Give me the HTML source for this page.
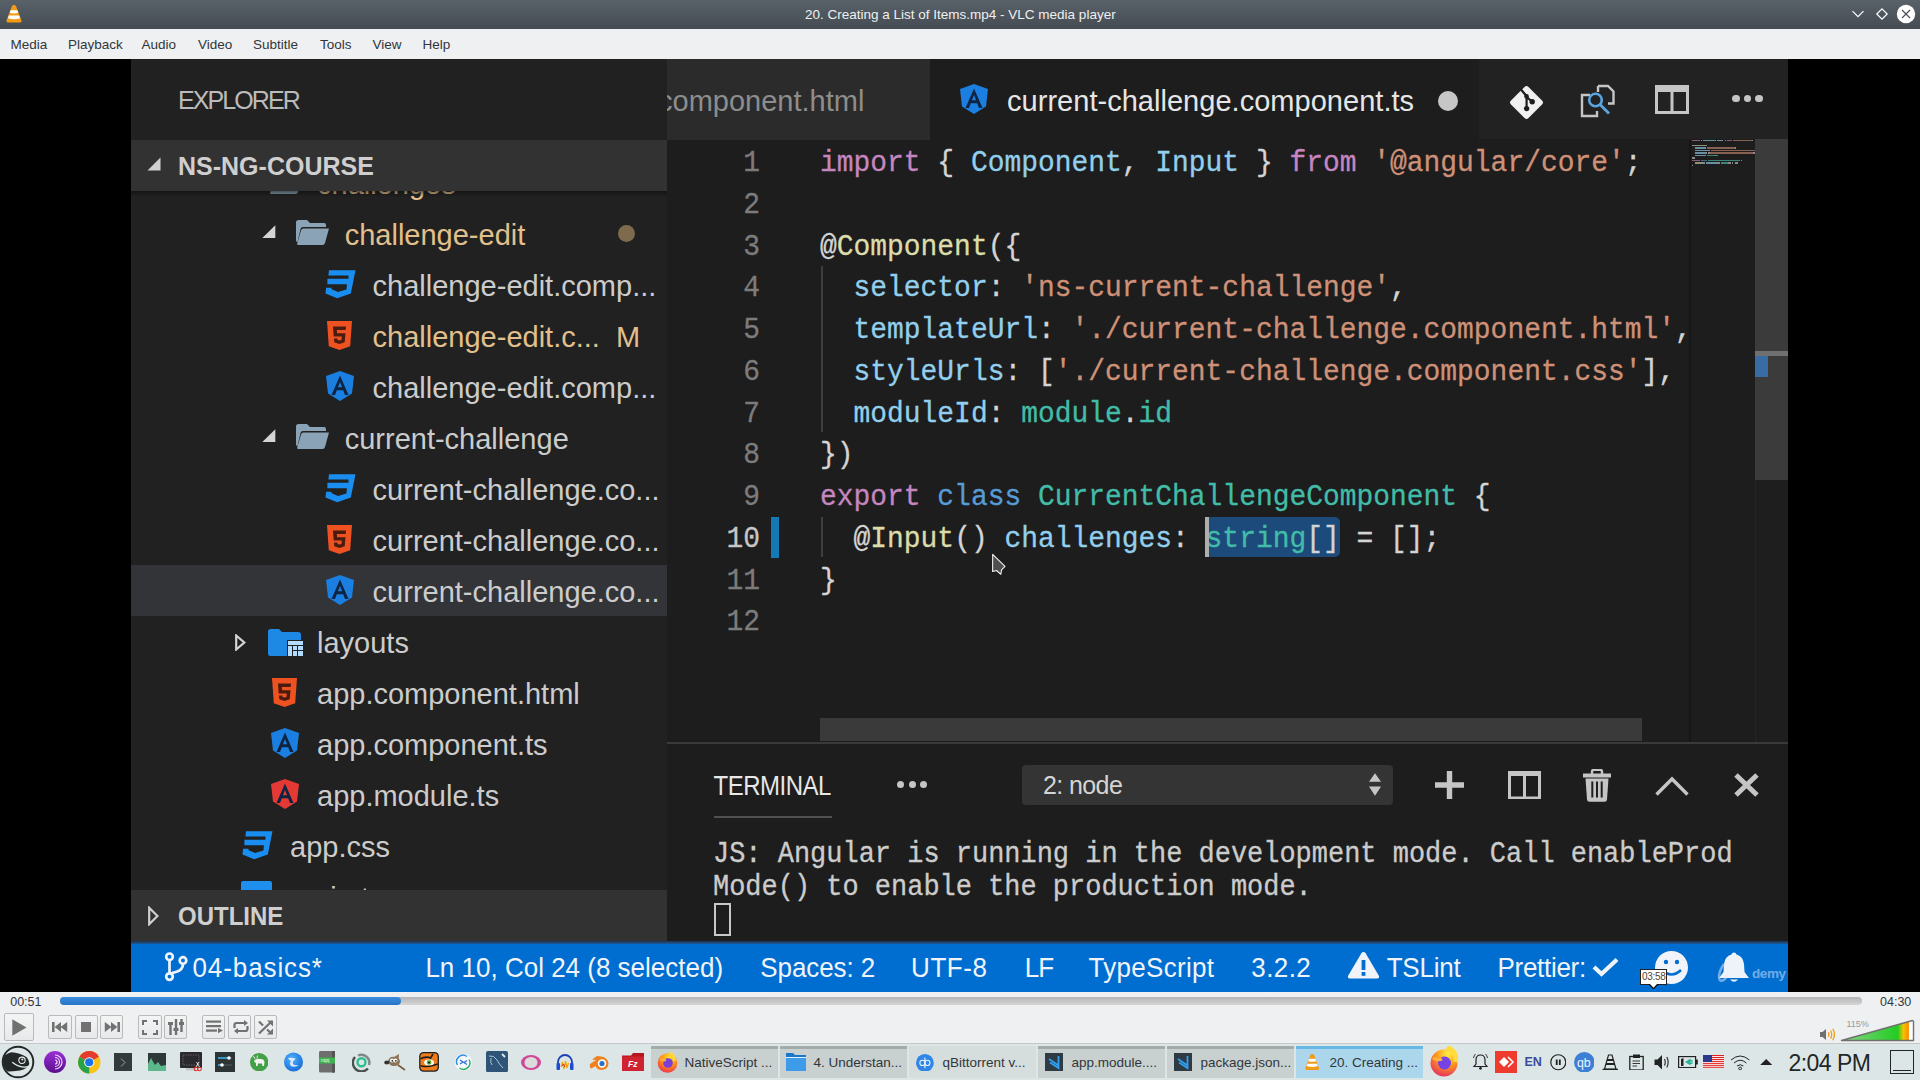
<!DOCTYPE html>
<html><head><meta charset="utf-8">
<style>
*{box-sizing:border-box;margin:0;padding:0}
html,body{width:1920px;height:1080px;overflow:hidden;background:#000;font-family:"Liberation Sans",sans-serif}
.a{position:absolute}
.t{position:absolute;white-space:pre;line-height:1}
#title{left:0;top:0;width:1920px;height:29px;background:linear-gradient(#5a6269,#444b52)}
#menu{left:0;top:29px;width:1920px;height:30px;background:#eff0f1}
#video{left:0;top:59px;width:1920px;height:933px;background:#000}
#vsc{left:131px;top:59px;width:1657px;height:933px;background:#1d1d1d;overflow:hidden}
#side{left:0;top:0;width:536px;height:882px;background:#212121;overflow:hidden}
#ctrl{left:0;top:992px;width:1920px;height:51px;background:#eff0f1}
#task{left:0;top:1043px;width:1920px;height:37px;background:#dce4e4}
.mono{font-family:"Liberation Mono",monospace;-webkit-text-stroke:0.3px currentColor}
</style></head><body>
<!-- TITLE BAR -->
<div id="title" class="a">
  <svg class="a" style="left:5px;top:4px" width="18" height="20" viewBox="0 0 18 20">
    <path d="M7.2 1.5 Q9 0.3 10.8 1.5 L16.5 16.5 Q17 18.5 15 18.5 L3 18.5 Q1 18.5 1.5 16.5 Z" fill="#f39a17"/>
    <path d="M5.6 6.2 L12.4 6.2 L13.3 8.8 Q9 10 4.7 8.8 Z" fill="#fff"/>
    <path d="M3.9 11.5 L14.1 11.5 L15.1 14.2 Q9 16.2 2.9 14.2 Z" fill="#fff"/>
  </svg>
  <div class="t" style="left:805px;top:7.6px;font-size:13.5px;color:#eef0f1">20. Creating a List of Items.mp4 - VLC media player</div>
  <svg class="a" style="left:1850px;top:8px" width="16" height="12" viewBox="0 0 16 12"><path d="M2.5 3.2 L8 8.7 L13.5 3.2" stroke="#fff" stroke-width="1.2" fill="none"/></svg>
  <svg class="a" style="left:1875px;top:7px" width="14" height="14" viewBox="0 0 14 14"><path d="M7 1.8 L12.2 7 L7 12.2 L1.8 7 Z" stroke="#fff" stroke-width="1.2" fill="none"/></svg>
  <svg class="a" style="left:1896px;top:4px" width="20" height="20" viewBox="0 0 20 20"><circle cx="10" cy="10" r="9.2" fill="#fff"/><path d="M6 6 L14 14 M14 6 L6 14" stroke="#454c54" stroke-width="1.1"/></svg>
</div>
<!-- MENU -->
<div id="menu" class="a">
  <div class="t" style="left:10.6px;top:9.2px;font-size:13.5px;color:#31363b">Media</div>
  <div class="t" style="left:68px;top:9.2px;font-size:13.5px;color:#31363b">Playback</div>
  <div class="t" style="left:141.5px;top:9.2px;font-size:13.5px;color:#31363b">Audio</div>
  <div class="t" style="left:198px;top:9.2px;font-size:13.5px;color:#31363b">Video</div>
  <div class="t" style="left:253px;top:9.2px;font-size:13.5px;color:#31363b">Subtitle</div>
  <div class="t" style="left:320px;top:9.2px;font-size:13.5px;color:#31363b">Tools</div>
  <div class="t" style="left:372.5px;top:9.2px;font-size:13.5px;color:#31363b">View</div>
  <div class="t" style="left:422.5px;top:9.2px;font-size:13.5px;color:#31363b">Help</div>
</div>
<svg width="0" height="0" style="position:absolute">
<defs>
 <symbol id="i-css" viewBox="0 0 31 29"><path d="M4 0.2 L30.5 0.2 L25.8 23.5 L12.2 28.2 L0.5 23.5 L1.1 17.7 L6.3 17.7 L6.7 19.2 L13 22 L21.5 19.6 L21.9 14.2 L2.4 14.2 L2.4 8.7 L23.5 8.7 L23.5 5.6 L3.4 5.6 Z" fill="#1a8ef0"/></symbol>
 <symbol id="i-html" viewBox="0 0 25 29"><path d="M0 0 L25 0 L23.2 25.3 L12.5 29 L1.8 25.3 Z" fill="#ee5220"/><path d="M6 5.5 L19 5.5 L18.7 9 L9.8 9 L10.1 12.3 L18.5 12.3 L17.7 21.3 L12.5 23 L7.3 21.3 L7 17.5 L10.4 17.5 L10.5 19 L12.5 19.6 L14.5 19 L14.8 15.6 L6.7 15.6 Z" fill="#4a1c10"/></symbol>
 <symbol id="i-ng" viewBox="0 0 28 30"><path d="M14 0 L28 5 L26 22.5 L14 30 L2 22.5 L0 5 Z" fill="CURRENT"/><path d="M14 4.5 L22.5 24 L19 24 L17.2 19.3 L10.8 19.3 L9 24 L5.5 24 Z M14 11 L11.9 16.3 L16.1 16.3 Z" fill="#102a44"/></symbol>
 <symbol id="i-folder" viewBox="0 0 33 25"><path d="M2.5 0 L11 0 L14 3 L28 3 Q30 3 30 5 L30 7 L7 7 Q5 7 4.5 9 L1.5 22 L1 22 Q0 22 0 20 L0 2.5 Q0 0 2.5 0 Z" fill="#8aa3b6"/><path d="M7.5 8.5 L33 8.5 L29 23 Q28.5 25 26.5 25 L2.5 25 Q0.8 25 1.2 23.5 L5 10.5 Q5.5 8.5 7.5 8.5 Z" fill="#8aa3b6"/></symbol>
 <symbol id="i-ts" viewBox="0 0 31 29"><rect x="0" y="0" width="31" height="29" rx="2" fill="#1e8fee"/></symbol>
</defs></svg>
<!-- VIDEO -->
<div id="video" class="a"></div>
<div class="a" style="left:131px;top:59px;width:1657px;height:933px;background:#1d1d1d"></div>
<!-- SIDEBAR -->
<div class="a" style="left:131px;top:59px;width:536px;height:882px;background:#212121;overflow:hidden"></div>
<div class="a" style="left:0;top:0;width:1920px;height:1080px;clip-path:inset(191px 1253px 190px 131px)">
<svg class="a" style="left:268.6px;top:169.4px" width="33" height="25"><use href="#i-folder"/></svg>
<div class="t" style="left:317px;top:169.65px;font-size:29px;color:#e2c08d">challenges</div>

<svg class="a" style="left:296.3px;top:220.4px" width="33" height="25"><use href="#i-folder"/></svg>
<svg class="a" style="left:262.0px;top:225px" width="14" height="14" viewBox="0 0 14 14"><path d="M13.3 0.3 L13.3 13 L0.3 13 Z" fill="#d4d4d4"/></svg>
<div class="t" style="left:344.7px;top:220.65px;font-size:29px;color:#e2c08d">challenge-edit</div>
<div class="a" style="left:617.5px;top:224.5px;width:17.5px;height:17.5px;border-radius:50%;background:#7e6b4e"></div>
<svg class="a" style="left:324.6px;top:269.6px" width="31" height="29"><use href="#i-css"/></svg>
<div class="t" style="left:372.6px;top:271.65px;font-size:29px;color:#cccccc">challenge-edit.comp...</div>

<svg class="a" style="left:327.40000000000003px;top:320.6px" width="25" height="29"><use href="#i-html"/></svg>
<div class="t" style="left:372.6px;top:322.65px;font-size:29px;color:#e2c08d">challenge-edit.c...</div>
<div class="t" style="left:616px;top:322.65px;font-size:29px;color:#e2c08d">M</div>
<svg class="a" style="left:326.3px;top:371.2px" width="28" height="30" viewBox="0 0 28 30"><path d="M14 0 L28 5 L26 22.5 L14 30 L2 22.5 L0 5 Z" fill="#1a7fe0"/><path d="M14 4.5 L22.5 24 L19 24 L17.2 19.3 L10.8 19.3 L9 24 L5.5 24 Z M14 11 L11.9 16.3 L16.1 16.3 Z" fill="#0f2440"/></svg>
<div class="t" style="left:372.6px;top:373.65px;font-size:29px;color:#cccccc">challenge-edit.comp...</div>

<svg class="a" style="left:296.3px;top:424.4px" width="33" height="25"><use href="#i-folder"/></svg>
<svg class="a" style="left:262.0px;top:429px" width="14" height="14" viewBox="0 0 14 14"><path d="M13.3 0.3 L13.3 13 L0.3 13 Z" fill="#d4d4d4"/></svg>
<div class="t" style="left:344.7px;top:424.65px;font-size:29px;color:#cccccc">current-challenge</div>

<svg class="a" style="left:324.6px;top:473.6px" width="31" height="29"><use href="#i-css"/></svg>
<div class="t" style="left:372.6px;top:475.65px;font-size:29px;color:#cccccc">current-challenge.co...</div>

<svg class="a" style="left:327.40000000000003px;top:524.6px" width="25" height="29"><use href="#i-html"/></svg>
<div class="t" style="left:372.6px;top:526.65px;font-size:29px;color:#cccccc">current-challenge.co...</div>

<div class="a" style="left:131px;top:565px;width:536px;height:51px;background:#333438"></div>
<svg class="a" style="left:326.3px;top:575.2px" width="28" height="30" viewBox="0 0 28 30"><path d="M14 0 L28 5 L26 22.5 L14 30 L2 22.5 L0 5 Z" fill="#1a7fe0"/><path d="M14 4.5 L22.5 24 L19 24 L17.2 19.3 L10.8 19.3 L9 24 L5.5 24 Z M14 11 L11.9 16.3 L16.1 16.3 Z" fill="#0f2440"/></svg>
<div class="t" style="left:372.6px;top:577.65px;font-size:29px;color:#cccccc">current-challenge.co...</div>

<svg class="a" style="left:268px;top:629px" width="35" height="27" viewBox="0 0 35 27"><path d="M2.5 0 L11 0 L14 3 L30 3 Q33 3 33 6 L33 11 L19 11 L19 27 L2.5 27 Q0 27 0 24.5 L0 2.5 Q0 0 2.5 0 Z" fill="#1e88e5"/><rect x="20" y="12" width="15" height="4" fill="#b3dcff"/><rect x="20" y="17" width="4" height="10" fill="#b3dcff"/><rect x="25" y="17" width="4" height="4" fill="#b3dcff"/><rect x="30" y="17" width="5" height="4" fill="#b3dcff"/><rect x="25" y="22" width="4" height="5" fill="#b3dcff"/><rect x="30" y="22" width="5" height="5" fill="#b3dcff"/></svg>
<svg class="a" style="left:235.0px;top:634px" width="11" height="17" viewBox="0 0 11 17"><path d="M1.2 1.5 L9.3 8.5 L1.2 15.5 Z" fill="none" stroke="#d4d4d4" stroke-width="2.2" stroke-linejoin="miter"/></svg>
<div class="t" style="left:317px;top:628.65px;font-size:29px;color:#cccccc">layouts</div>

<svg class="a" style="left:271.8px;top:677.6px" width="25" height="29"><use href="#i-html"/></svg>
<div class="t" style="left:317px;top:679.65px;font-size:29px;color:#cccccc">app.component.html</div>

<svg class="a" style="left:270.7px;top:728.2px" width="28" height="30" viewBox="0 0 28 30"><path d="M14 0 L28 5 L26 22.5 L14 30 L2 22.5 L0 5 Z" fill="#1a7fe0"/><path d="M14 4.5 L22.5 24 L19 24 L17.2 19.3 L10.8 19.3 L9 24 L5.5 24 Z M14 11 L11.9 16.3 L16.1 16.3 Z" fill="#0f2440"/></svg>
<div class="t" style="left:317px;top:730.65px;font-size:29px;color:#cccccc">app.component.ts</div>

<svg class="a" style="left:270.7px;top:779.2px" width="28" height="30" viewBox="0 0 28 30"><path d="M14 0 L28 5 L26 22.5 L14 30 L2 22.5 L0 5 Z" fill="#e53935"/><path d="M14 4.5 L22.5 24 L19 24 L17.2 19.3 L10.8 19.3 L9 24 L5.5 24 Z M14 11 L11.9 16.3 L16.1 16.3 Z" fill="#0f2440"/></svg>
<div class="t" style="left:317px;top:781.65px;font-size:29px;color:#cccccc">app.module.ts</div>

<svg class="a" style="left:242px;top:830.6px" width="31" height="29"><use href="#i-css"/></svg>
<div class="t" style="left:290px;top:832.65px;font-size:29px;color:#cccccc">app.css</div>

<svg class="a" style="left:241px;top:881px" width="31" height="29"><use href="#i-ts"/></svg>
<div class="t" style="left:290px;top:883.65px;font-size:29px;color:#cccccc">main.ts</div>

</div>
<div class="t" style="left:178px;top:87.5px;font-size:25px;color:#bbbbbb;letter-spacing:-1.9px">EXPLORER</div>
<div class="a" style="left:131px;top:191px;width:536px;height:6px;background:linear-gradient(rgba(10,10,10,0.55),rgba(10,10,10,0))"></div>
<div class="a" style="left:131px;top:140px;width:536px;height:51px;background:#323232"></div>
<svg class="a" style="left:147px;top:157px" width="14" height="14" viewBox="0 0 14 14"><path d="M13.5 0.5 L13.5 13.5 L0.5 13.5 Z" fill="#d0d0d0"/></svg>
<div class="t" style="left:178px;top:154px;font-size:25px;font-weight:700;color:#cfcfcf;transform:scaleY(1.05);transform-origin:0 21px">NS-NG-COURSE</div>
<div class="a" style="left:131px;top:890px;width:536px;height:51px;background:#323232"></div>
<svg class="a" style="left:148px;top:906px" width="11" height="20" viewBox="0 0 11 20"><path d="M1.2 1.8 L9.5 10 L1.2 18.2 Z" fill="none" stroke="#d0d0d0" stroke-width="2.2"/></svg>
<div class="t" style="left:178px;top:905.3px;font-size:24px;font-weight:700;color:#cfcfcf;transform:scaleY(1.1);transform-origin:0 20px">OUTLINE</div>
<!-- EDITOR -->
<div class="a" style="left:667px;top:59px;width:1121px;height:80px;background:#222222"></div>
<div class="a" style="left:667px;top:59px;width:263px;height:81px;background:#2b2b2b;overflow:hidden"><div class="t" style="left:-9px;top:28px;font-size:29px;color:#8d8d8d">component.html</div></div>
<div class="a" style="left:930px;top:59px;width:549px;height:81px;background:#1d1d1d"></div>
<svg class="a" style="left:960px;top:84px" width="28" height="30" viewBox="0 0 28 30"><path d="M14 0 L28 5 L26 22.5 L14 30 L2 22.5 L0 5 Z" fill="#1a7fe0"/><path d="M14 4.5 L22.5 24 L19 24 L17.2 19.3 L10.8 19.3 L9 24 L5.5 24 Z M14 11 L11.9 16.3 L16.1 16.3 Z" fill="#0f2440"/></svg>
<div class="t" style="left:1007px;top:87px;font-size:29px;color:#e6e6e6;letter-spacing:0.03px">current-challenge.component.ts</div>
<div class="a" style="left:1438px;top:90.5px;width:20px;height:20px;border-radius:50%;background:#c6c6c6"></div>
<svg class="a" style="left:1509px;top:85px" width="35" height="35" viewBox="0 0 35 35"><path d="M17.5 1 Q18.5 1 19.5 2 L33 15.5 Q34 16.5 34 17.5 Q34 18.5 33 19.5 L19.5 33 Q18.5 34 17.5 34 Q16.5 34 15.5 33 L2 19.5 Q1 18.5 1 17.5 Q1 16.5 2 15.5 L15.5 2 Q16.5 1 17.5 1 Z" fill="#f0f0f0"/><path d="M12 4.5 L17.6 11.2 L17.6 23.4 M17.6 12 L23 16.5" stroke="#1d1d1d" stroke-width="2.2" fill="none"/><circle cx="17.6" cy="11.4" r="2.3" fill="#1d1d1d"/><circle cx="17.6" cy="23.6" r="2.7" fill="#1d1d1d"/><circle cx="23.2" cy="16.7" r="2.7" fill="#1d1d1d"/></svg>
<svg class="a" style="left:1580px;top:82px" width="36" height="36" viewBox="0 0 36 36"><path d="M18 4 L28 4 L33.5 9.5 L33.5 21.5 L28 21.5" stroke="#c5c5c5" stroke-width="2.4" fill="none"/><path d="M10 13 L2 13 L2 34 L17 34 L17 29" stroke="#c5c5c5" stroke-width="2.4" fill="none"/><path d="M18 4 L18 10" stroke="#c5c5c5" stroke-width="2.4"/><circle cx="15.5" cy="18" r="6.3" stroke="#5aa5e0" stroke-width="2.6" fill="none"/><path d="M20 22.5 L29 31.5" stroke="#5aa5e0" stroke-width="2.8"/></svg>
<svg class="a" style="left:1655px;top:85px" width="34" height="29" viewBox="0 0 34 29"><path d="M1.5 1.5 L32.5 1.5 L32.5 27.5 L1.5 27.5 Z M17 7 L17 27.5" stroke="#c5c5c5" stroke-width="3" fill="none"/><rect x="0" y="0" width="34" height="7" fill="#c5c5c5"/></svg>
<div class="a" style="left:1732.4px;top:94.8px;width:7.2px;height:7.2px;border-radius:50%;background:#c5c5c5"></div>
<div class="a" style="left:1743.9px;top:94.8px;width:7.2px;height:7.2px;border-radius:50%;background:#c5c5c5"></div>
<div class="a" style="left:1755.4px;top:94.8px;width:7.2px;height:7.2px;border-radius:50%;background:#c5c5c5"></div>
<div class="a" style="left:821px;top:266px;width:1.5px;height:166px;background:#3e3e3e"></div>
<div class="a" style="left:821px;top:516.6px;width:1.5px;height:40.4px;background:#3e3e3e"></div>
<div class="a" style="left:771px;top:516.6px;width:8px;height:41px;background:#137ab6"></div>
<div class="a" style="left:1205px;top:516.7px;width:135px;height:40.6px;background:#1c4a7a;border-radius:5px"></div>
<div class="t mono" style="left:700px;width:60px;text-align:right;top:150.20px;font-size:27.95px;color:#7c7c7c;transform:scaleY(1.05);transform-origin:0 21px">1</div>
<div class="t mono" style="left:820px;top:150.20px;font-size:27.95px;transform:scaleY(1.05);transform-origin:0 21px"><span style="color:#c586c0">import</span><span style="color:#d4d4d4"> { </span><span style="color:#92cfec">Component</span><span style="color:#d4d4d4">, </span><span style="color:#92cfec">Input</span><span style="color:#d4d4d4"> } </span><span style="color:#c586c0">from</span><span style="color:#d4d4d4"> </span><span style="color:#ce9178">'@angular/core'</span><span style="color:#d4d4d4">;</span></div>
<div class="t mono" style="left:700px;width:60px;text-align:right;top:191.93px;font-size:27.95px;color:#7c7c7c;transform:scaleY(1.05);transform-origin:0 21px">2</div>
<div class="t mono" style="left:700px;width:60px;text-align:right;top:233.66px;font-size:27.95px;color:#7c7c7c;transform:scaleY(1.05);transform-origin:0 21px">3</div>
<div class="t mono" style="left:820px;top:233.66px;font-size:27.95px;transform:scaleY(1.05);transform-origin:0 21px"><span style="color:#d4d4d4">@</span><span style="color:#dcdcaa">Component</span><span style="color:#d4d4d4">({</span></div>
<div class="t mono" style="left:700px;width:60px;text-align:right;top:275.39px;font-size:27.95px;color:#7c7c7c;transform:scaleY(1.05);transform-origin:0 21px">4</div>
<div class="t mono" style="left:820px;top:275.39px;font-size:27.95px;transform:scaleY(1.05);transform-origin:0 21px"><span style="color:#d4d4d4">  </span><span style="color:#92cfec">selector</span><span style="color:#d4d4d4">: </span><span style="color:#ce9178">'ns-current-challenge'</span><span style="color:#d4d4d4">,</span></div>
<div class="t mono" style="left:700px;width:60px;text-align:right;top:317.12px;font-size:27.95px;color:#7c7c7c;transform:scaleY(1.05);transform-origin:0 21px">5</div>
<div class="t mono" style="left:820px;top:317.12px;font-size:27.95px;transform:scaleY(1.05);transform-origin:0 21px"><span style="color:#d4d4d4">  </span><span style="color:#92cfec">templateUrl</span><span style="color:#d4d4d4">: </span><span style="color:#ce9178">'./current-challenge.component.html'</span><span style="color:#d4d4d4">,</span></div>
<div class="t mono" style="left:700px;width:60px;text-align:right;top:358.85px;font-size:27.95px;color:#7c7c7c;transform:scaleY(1.05);transform-origin:0 21px">6</div>
<div class="t mono" style="left:820px;top:358.85px;font-size:27.95px;transform:scaleY(1.05);transform-origin:0 21px"><span style="color:#d4d4d4">  </span><span style="color:#92cfec">styleUrls</span><span style="color:#d4d4d4">: [</span><span style="color:#ce9178">'./current-challenge.component.css'</span><span style="color:#d4d4d4">],</span></div>
<div class="t mono" style="left:700px;width:60px;text-align:right;top:400.58px;font-size:27.95px;color:#7c7c7c;transform:scaleY(1.05);transform-origin:0 21px">7</div>
<div class="t mono" style="left:820px;top:400.58px;font-size:27.95px;transform:scaleY(1.05);transform-origin:0 21px"><span style="color:#d4d4d4">  </span><span style="color:#92cfec">moduleId</span><span style="color:#d4d4d4">: </span><span style="color:#42bca8">module</span><span style="color:#d4d4d4">.</span><span style="color:#42bca8">id</span></div>
<div class="t mono" style="left:700px;width:60px;text-align:right;top:442.31px;font-size:27.95px;color:#7c7c7c;transform:scaleY(1.05);transform-origin:0 21px">8</div>
<div class="t mono" style="left:820px;top:442.31px;font-size:27.95px;transform:scaleY(1.05);transform-origin:0 21px"><span style="color:#d4d4d4">})</span></div>
<div class="t mono" style="left:700px;width:60px;text-align:right;top:484.04px;font-size:27.95px;color:#7c7c7c;transform:scaleY(1.05);transform-origin:0 21px">9</div>
<div class="t mono" style="left:820px;top:484.04px;font-size:27.95px;transform:scaleY(1.05);transform-origin:0 21px"><span style="color:#c586c0">export</span><span style="color:#d4d4d4"> </span><span style="color:#569cd6">class</span><span style="color:#d4d4d4"> </span><span style="color:#42bca8">CurrentChallengeComponent</span><span style="color:#d4d4d4"> {</span></div>
<div class="t mono" style="left:700px;width:60px;text-align:right;top:525.77px;font-size:27.95px;color:#c6c6c6;transform:scaleY(1.05);transform-origin:0 21px">10</div>
<div class="t mono" style="left:820px;top:525.77px;font-size:27.95px;transform:scaleY(1.05);transform-origin:0 21px"><span style="color:#d4d4d4">  </span><span style="color:#d4d4d4">@</span><span style="color:#dcdcaa">Input</span><span style="color:#d4d4d4">() </span><span style="color:#92cfec">challenges</span><span style="color:#d4d4d4">: </span><span style="color:#42bca8">string</span><span style="color:#d4d4d4">[]</span><span style="color:#d4d4d4"> = [];</span></div>
<div class="t mono" style="left:700px;width:60px;text-align:right;top:567.50px;font-size:27.95px;color:#7c7c7c;transform:scaleY(1.05);transform-origin:0 21px">11</div>
<div class="t mono" style="left:820px;top:567.50px;font-size:27.95px;transform:scaleY(1.05);transform-origin:0 21px"><span style="color:#d4d4d4">}</span></div>
<div class="t mono" style="left:700px;width:60px;text-align:right;top:609.23px;font-size:27.95px;color:#7c7c7c;transform:scaleY(1.05);transform-origin:0 21px">12</div>
<div class="a" style="left:1205px;top:516.7px;width:4px;height:40.6px;background:#aeafad"></div>
<div class="a" style="left:1688.5px;top:140px;width:2.5px;height:603px;background:#161616"></div>
<div class="a" style="left:1755px;top:140px;width:33px;height:603px;background:#1e1e1e;border-left:1px solid #252525"></div>
<div class="a" style="left:1755px;top:139px;width:33px;height:341px;background:#3b3b3b"></div>
<div class="a" style="left:1755px;top:351px;width:33px;height:4.5px;background:#707070"></div>
<div class="a" style="left:1755px;top:355.5px;width:13px;height:21px;background:#386ca3"></div>
<div class="a" style="left:820px;top:718px;width:822px;height:23px;background:#3a3a3a"></div>
<svg class="a" style="left:990px;top:552px" width="18" height="25" viewBox="0 0 18 25"><path d="M2.7 2.4 L15 14.4 L11.6 17.8 L10.8 22.3 L6.5 18.5 L2.6 19.5 Z" fill="#505050" stroke="#f2f2f2" stroke-width="1.1" stroke-linejoin="round"/></svg>
<div class="a" style="left:1692.00px;top:139.50px;width:7.50px;height:1.7px;background:#c586c0;opacity:0.6"></div>
<div class="a" style="left:1700.75px;top:139.50px;width:1.25px;height:1.7px;background:#d4d4d4;opacity:0.6"></div>
<div class="a" style="left:1703.25px;top:139.50px;width:11.25px;height:1.7px;background:#9cdcfe;opacity:0.6"></div>
<div class="a" style="left:1714.50px;top:139.50px;width:1.25px;height:1.7px;background:#d4d4d4;opacity:0.6"></div>
<div class="a" style="left:1717.00px;top:139.50px;width:6.25px;height:1.7px;background:#9cdcfe;opacity:0.6"></div>
<div class="a" style="left:1724.50px;top:139.50px;width:1.25px;height:1.7px;background:#d4d4d4;opacity:0.6"></div>
<div class="a" style="left:1727.00px;top:139.50px;width:5.00px;height:1.7px;background:#c586c0;opacity:0.6"></div>
<div class="a" style="left:1733.25px;top:139.50px;width:18.75px;height:1.7px;background:#ce9178;opacity:0.6"></div>
<div class="a" style="left:1752.00px;top:139.50px;width:1.25px;height:1.7px;background:#d4d4d4;opacity:0.6"></div>
<div class="a" style="left:1692.00px;top:144.50px;width:1.25px;height:1.7px;background:#d4d4d4;opacity:0.6"></div>
<div class="a" style="left:1693.25px;top:144.50px;width:11.25px;height:1.7px;background:#dcdcaa;opacity:0.6"></div>
<div class="a" style="left:1704.50px;top:144.50px;width:2.50px;height:1.7px;background:#d4d4d4;opacity:0.6"></div>
<div class="a" style="left:1694.50px;top:147.00px;width:10.00px;height:1.7px;background:#9cdcfe;opacity:0.6"></div>
<div class="a" style="left:1704.50px;top:147.00px;width:1.25px;height:1.7px;background:#d4d4d4;opacity:0.6"></div>
<div class="a" style="left:1707.00px;top:147.00px;width:27.50px;height:1.7px;background:#ce9178;opacity:0.6"></div>
<div class="a" style="left:1734.50px;top:147.00px;width:1.25px;height:1.7px;background:#d4d4d4;opacity:0.6"></div>
<div class="a" style="left:1694.50px;top:149.50px;width:13.75px;height:1.7px;background:#9cdcfe;opacity:0.6"></div>
<div class="a" style="left:1708.25px;top:149.50px;width:1.25px;height:1.7px;background:#d4d4d4;opacity:0.6"></div>
<div class="a" style="left:1710.75px;top:149.50px;width:44.25px;height:1.7px;background:#ce9178;opacity:0.6"></div>
<div class="a" style="left:1694.50px;top:152.00px;width:11.25px;height:1.7px;background:#9cdcfe;opacity:0.6"></div>
<div class="a" style="left:1705.75px;top:152.00px;width:1.25px;height:1.7px;background:#d4d4d4;opacity:0.6"></div>
<div class="a" style="left:1708.25px;top:152.00px;width:1.25px;height:1.7px;background:#d4d4d4;opacity:0.6"></div>
<div class="a" style="left:1709.50px;top:152.00px;width:43.75px;height:1.7px;background:#ce9178;opacity:0.6"></div>
<div class="a" style="left:1753.25px;top:152.00px;width:1.75px;height:1.7px;background:#d4d4d4;opacity:0.6"></div>
<div class="a" style="left:1694.50px;top:154.50px;width:10.00px;height:1.7px;background:#9cdcfe;opacity:0.6"></div>
<div class="a" style="left:1704.50px;top:154.50px;width:1.25px;height:1.7px;background:#d4d4d4;opacity:0.6"></div>
<div class="a" style="left:1707.00px;top:154.50px;width:7.50px;height:1.7px;background:#4ec9b0;opacity:0.6"></div>
<div class="a" style="left:1714.50px;top:154.50px;width:1.25px;height:1.7px;background:#d4d4d4;opacity:0.6"></div>
<div class="a" style="left:1715.75px;top:154.50px;width:2.50px;height:1.7px;background:#4ec9b0;opacity:0.6"></div>
<div class="a" style="left:1692.00px;top:157.00px;width:2.50px;height:1.7px;background:#d4d4d4;opacity:0.6"></div>
<div class="a" style="left:1692.00px;top:159.50px;width:7.50px;height:1.7px;background:#c586c0;opacity:0.6"></div>
<div class="a" style="left:1700.75px;top:159.50px;width:6.25px;height:1.7px;background:#569cd6;opacity:0.6"></div>
<div class="a" style="left:1708.25px;top:159.50px;width:31.25px;height:1.7px;background:#4ec9b0;opacity:0.6"></div>
<div class="a" style="left:1740.75px;top:159.50px;width:1.25px;height:1.7px;background:#d4d4d4;opacity:0.6"></div>
<div class="a" style="left:1694.50px;top:162.00px;width:1.25px;height:1.7px;background:#d4d4d4;opacity:0.6"></div>
<div class="a" style="left:1695.75px;top:162.00px;width:6.25px;height:1.7px;background:#dcdcaa;opacity:0.6"></div>
<div class="a" style="left:1702.00px;top:162.00px;width:2.50px;height:1.7px;background:#d4d4d4;opacity:0.6"></div>
<div class="a" style="left:1705.75px;top:162.00px;width:12.50px;height:1.7px;background:#9cdcfe;opacity:0.6"></div>
<div class="a" style="left:1718.25px;top:162.00px;width:1.25px;height:1.7px;background:#d4d4d4;opacity:0.6"></div>
<div class="a" style="left:1720.75px;top:162.00px;width:7.50px;height:1.7px;background:#4ec9b0;opacity:0.6"></div>
<div class="a" style="left:1728.25px;top:162.00px;width:2.50px;height:1.7px;background:#d4d4d4;opacity:0.6"></div>
<div class="a" style="left:1732.00px;top:162.00px;width:1.25px;height:1.7px;background:#d4d4d4;opacity:0.6"></div>
<div class="a" style="left:1734.50px;top:162.00px;width:3.75px;height:1.7px;background:#d4d4d4;opacity:0.6"></div>
<div class="a" style="left:1692.00px;top:164.50px;width:1.25px;height:1.7px;background:#d4d4d4;opacity:0.6"></div>
<!-- PANEL -->
<div class="a" style="left:667px;top:742px;width:1121px;height:1.5px;background:#3a3a3a"></div>
<div class="t" style="left:713.5px;top:775px;font-size:24px;color:#e7e7e7;letter-spacing:-0.5px;transform:scaleY(1.14);transform-origin:0 20px">TERMINAL</div>
<div class="a" style="left:714px;top:815.5px;width:118px;height:2.5px;background:#505050"></div>
<div class="a" style="left:896.6px;top:780.9px;width:7.2px;height:7.2px;border-radius:50%;background:#c5c5c5"></div>
<div class="a" style="left:908.6999999999999px;top:780.9px;width:7.2px;height:7.2px;border-radius:50%;background:#c5c5c5"></div>
<div class="a" style="left:920.0px;top:780.9px;width:7.2px;height:7.2px;border-radius:50%;background:#c5c5c5"></div>
<div class="a" style="left:1022px;top:765px;width:371px;height:40px;background:#343434;border-radius:4px"></div>
<div class="t" style="left:1043px;top:773px;font-size:25px;color:#d4d4d4;letter-spacing:-0.6px">2: node</div>
<svg class="a" style="left:1368px;top:773px" width="14" height="24" viewBox="0 0 14 24"><path d="M7 0.3 L13 8.7 L1 8.7 Z M1 13.5 L13 13.5 L7 22.8 Z" fill="#c5c5c5"/></svg>
<svg class="a" style="left:1435px;top:771px" width="29" height="28" viewBox="0 0 29 28"><path d="M11.8 0 H17.2 V11.3 H29 V16.7 H17.2 V28 H11.8 V16.7 H0 V11.3 H11.8 Z" fill="#c5c5c5"/></svg>
<svg class="a" style="left:1507.5px;top:770.8px" width="33" height="28.5" viewBox="0 0 33 28.5"><path d="M1.5 1.5 H31.5 V27 H1.5 Z M16.5 5 V27" stroke="#c5c5c5" stroke-width="3" fill="none"/><rect x="0" y="0" width="33" height="5" fill="#c5c5c5"/></svg>
<svg class="a" style="left:1583px;top:768.5px" width="28" height="33" viewBox="0 0 28 33"><path d="M9 5 V2.5 Q9 0.8 11 0.8 H17 Q19 0.8 19 2.5 V5" stroke="#c5c5c5" stroke-width="2.4" fill="none"/><rect x="0" y="4.5" width="28" height="4" fill="#c5c5c5"/><path d="M2.5 9.5 H25.5 L24 30.5 Q23.8 32.8 21.5 32.8 H6.5 Q4.2 32.8 4 30.5 Z" fill="#c5c5c5"/><rect x="8.3" y="12.5" width="2" height="16" fill="#1e1e1e"/><rect x="13" y="12.5" width="2" height="16" fill="#1e1e1e"/><rect x="17.7" y="12.5" width="2" height="16" fill="#1e1e1e"/></svg>
<svg class="a" style="left:1655px;top:775px" width="34" height="21" viewBox="0 0 34 21"><path d="M1.5 19.5 L17 4 L32.5 19.5" stroke="#c5c5c5" stroke-width="3.4" fill="none"/></svg>
<svg class="a" style="left:1734px;top:773px" width="25" height="24" viewBox="0 0 25 24"><path d="M2 2 L23 22 M23 2 L2 22" stroke="#c5c5c5" stroke-width="5" fill="none"/></svg>
<div class="t mono" style="left:713px;top:842px;font-size:26.98px;color:#cccccc;transform:scaleY(1.1);transform-origin:0 20.5px">JS: Angular is running in the development mode. Call enableProd</div>
<div class="t mono" style="left:713px;top:875px;font-size:26.98px;color:#cccccc;transform:scaleY(1.1);transform-origin:0 20.5px">Mode() to enable the production mode.</div>
<div class="a" style="left:713.5px;top:903px;width:17px;height:33px;border:2.2px solid #c8c8c8"></div>
<div class="a" style="left:131px;top:941px;width:1657px;height:51px;background:#006ed0"></div>
<div class="a" style="left:131px;top:940.5px;width:1657px;height:3px;background:linear-gradient(#1c3350,#1f5a98)"></div>
<svg class="a" style="left:164px;top:952px" width="24" height="30" viewBox="0 0 24 30"><circle cx="5.5" cy="4.8" r="3.3" stroke="#f0f4fa" stroke-width="2.7" fill="none"/><circle cx="5.5" cy="24.6" r="3.3" stroke="#f0f4fa" stroke-width="2.7" fill="none"/><circle cx="19" cy="8.5" r="3.3" stroke="#f0f4fa" stroke-width="2.7" fill="none"/><path d="M5.5 8.2 V21.3 M19 11.9 Q19 17.5 12.5 19.8 Q7 21.5 6.2 21.8" stroke="#f0f4fa" stroke-width="2.7" fill="none"/></svg>
<div class="t" style="left:192.5px;top:954.7px;font-size:26px;color:#f0f4fa;transform:scaleY(1.08);transform-origin:0 22px;letter-spacing:0.9px">04-basics*</div>
<div class="t" style="left:425.4px;top:954.7px;font-size:26px;color:#f0f4fa;transform:scaleY(1.08);transform-origin:0 22px;letter-spacing:0px">Ln 10, Col 24 (8 selected)</div>
<div class="t" style="left:760.3px;top:954.7px;font-size:26px;color:#f0f4fa;transform:scaleY(1.08);transform-origin:0 22px;letter-spacing:-0.1px">Spaces: 2</div>
<div class="t" style="left:911px;top:954.7px;font-size:26px;color:#f0f4fa;transform:scaleY(1.08);transform-origin:0 22px;letter-spacing:0.6px">UTF-8</div>
<div class="t" style="left:1024.7px;top:954.7px;font-size:26px;color:#f0f4fa;transform:scaleY(1.08);transform-origin:0 22px;letter-spacing:-1px">LF</div>
<div class="t" style="left:1088.5px;top:954.7px;font-size:26px;color:#f0f4fa;transform:scaleY(1.08);transform-origin:0 22px;letter-spacing:0.3px">TypeScript</div>
<div class="t" style="left:1251.3px;top:954.7px;font-size:26px;color:#f0f4fa;transform:scaleY(1.08);transform-origin:0 22px;letter-spacing:0.4px">3.2.2</div>
<div class="t" style="left:1386.7px;top:954.7px;font-size:26px;color:#f0f4fa;transform:scaleY(1.08);transform-origin:0 22px;letter-spacing:-0.2px">TSLint</div>
<div class="t" style="left:1497.5px;top:954.7px;font-size:26px;color:#f0f4fa;transform:scaleY(1.08);transform-origin:0 22px;letter-spacing:-0.3px">Prettier:</div>
<svg class="a" style="left:1347px;top:951px" width="33" height="28" viewBox="0 0 33 28"><path d="M16.5 1 Q17.8 1 18.6 2.3 L32 25 Q32.6 27.3 30.3 27.5 H2.7 Q0.4 27.3 1 25 L14.4 2.3 Q15.2 1 16.5 1 Z" fill="#f0f4fa"/><rect x="14.6" y="9" width="3.8" height="10" fill="#006ed0"/><rect x="14.6" y="21" width="3.8" height="3.8" fill="#006ed0"/></svg>
<svg class="a" style="left:1592px;top:957px" width="27" height="20" viewBox="0 0 27 20"><path d="M2 10 L9.5 17 L25 2.5" stroke="#f0f4fa" stroke-width="4.2" fill="none"/></svg>
<svg class="a" style="left:1654px;top:950px" width="35" height="35" viewBox="0 0 35 35"><circle cx="17.5" cy="17.5" r="16.5" fill="#f0f4fa"/><circle cx="12" cy="12" r="2.2" fill="#006ed0"/><circle cx="23" cy="12" r="2.2" fill="#006ed0"/><path d="M8 20 Q17.5 29 27 20" stroke="#006ed0" stroke-width="2.6" fill="none"/></svg>
<svg class="a" style="left:1718px;top:951px" width="32" height="33" viewBox="0 0 32 33"><path d="M16 1.5 Q18 1.5 18.5 3.5 Q25 5 26 13 L26.5 21 L31 27 H1 L5.5 21 L6 13 Q7 5 13.5 3.5 Q14 1.5 16 1.5 Z" fill="#eef3fa"/><path d="M12 28.5 Q16 33 20 28.5 Z" fill="#eef3fa"/></svg>
<div class="t" style="left:1752px;top:966.5px;font-size:13.5px;font-weight:700;color:rgba(225,235,255,0.5);letter-spacing:-0.4px">demy</div>
<svg class="a" style="left:1716px;top:963px" width="14" height="20" viewBox="0 0 14 20"><path d="M8 1 Q3 8 3 14 Q3 18.5 6.5 17.5 Q10 16.5 11.5 11" stroke="rgba(225,235,255,0.5)" stroke-width="2.6" fill="none"/></svg>
<div class="a" style="left:1640px;top:968.5px;width:27px;height:16.5px;background:#fff;border:1px solid #222"></div>
<svg class="a" style="left:1648px;top:984px" width="11" height="6" viewBox="0 0 11 6"><path d="M0 0 L5.5 5.5 L11 0 Z" fill="#111"/><path d="M1.5 -0.5 L5.5 3.8 L9.5 -0.5 Z" fill="#fff"/></svg>
<div class="t" style="left:1642px;top:971.5px;font-size:10px;color:#5a3f2a;letter-spacing:-0.3px">03:58</div>
<!-- CONTROLS -->
<div id="ctrl" class="a"></div>
<div class="t" style="left:10.2px;top:996.1px;font-size:12.5px;color:#31363b">00:51</div>
<div class="t" style="left:1880px;top:996.1px;font-size:12.5px;color:#31363b">04:30</div>
<div class="a" style="left:60px;top:996.7px;width:1802px;height:8.5px;border-radius:4.4px;background:linear-gradient(#b4b4b4,#d6d6d6)"></div>
<div class="a" style="left:60px;top:996.7px;width:341px;height:8.5px;border-radius:4.4px;background:linear-gradient(#3a8ddf,#2874c6)"></div>
<div class="a" style="left:4.4px;top:1012.7px;width:29.200000000000003px;height:28.59999999999991px;border:1px solid #b9babb;border-radius:2px;background:linear-gradient(#f3f4f4,#e8e9ea)"></div><svg class="a" style="left:12px;top:1018.5px" width="15" height="17" viewBox="0 0 15 17"><path d="M0.3 0.3 L14.5 8.5 L0.3 16.7 Z" fill="#717171"/></svg>
<div class="a" style="left:48.4px;top:1015px;width:23.199999999999996px;height:23.799999999999955px;border:1px solid #b9babb;border-radius:2px;background:linear-gradient(#f3f4f4,#e8e9ea)"></div><svg class="a" style="left:52.3px;top:1022px" width="16" height="10" viewBox="0 0 16 10"><rect x="0" y="0" width="2.6" height="10" fill="#717171"/><path d="M2.6 5 L9 0 L9 10 Z M8.5 5 L15.2 0 L15.2 10 Z" fill="#717171"/></svg>
<div class="a" style="left:74.5px;top:1015px;width:23.200000000000003px;height:23.799999999999955px;border:1px solid #b9babb;border-radius:2px;background:linear-gradient(#f3f4f4,#e8e9ea)"></div><div class="a" style="left:81px;top:1022px;width:10px;height:10px;background:#717171"></div>
<div class="a" style="left:100.3px;top:1015px;width:23.10000000000001px;height:23.799999999999955px;border:1px solid #b9babb;border-radius:2px;background:linear-gradient(#f3f4f4,#e8e9ea)"></div><svg class="a" style="left:104.2px;top:1022px" width="16" height="10" viewBox="0 0 16 10"><rect x="13.4" y="0" width="2.6" height="10" fill="#717171"/><path d="M13.4 5 L7 0 L7 10 Z M7.5 5 L0.8 0 L0.8 10 Z" fill="#717171"/></svg>
<div class="a" style="left:138.3px;top:1015px;width:23.399999999999977px;height:23.799999999999955px;border:1px solid #b9babb;border-radius:2px;background:linear-gradient(#f3f4f4,#e8e9ea)"></div><svg class="a" style="left:142px;top:1019.5px" width="16" height="15" viewBox="0 0 16 15"><path d="M1 5 V1 H5 M11 1 H15 V5 M15 10 V14 H11 M5 14 H1 V10" stroke="#717171" stroke-width="2" fill="none"/></svg>
<div class="a" style="left:164.4px;top:1015px;width:23.099999999999994px;height:23.799999999999955px;border:1px solid #b9babb;border-radius:2px;background:linear-gradient(#f3f4f4,#e8e9ea)"></div><svg class="a" style="left:168px;top:1019px" width="16" height="16" viewBox="0 0 16 16"><path d="M2.5 3 V16 M8 0 V16 M13.5 0 V13" stroke="#717171" stroke-width="2.4"/><rect x="0" y="3" width="5" height="3" fill="#717171"/><rect x="5.5" y="9" width="5" height="3" fill="#717171"/><rect x="11" y="3" width="5" height="3" fill="#717171"/></svg>
<div class="a" style="left:202.3px;top:1015px;width:23.0px;height:23.799999999999955px;border:1px solid #b9babb;border-radius:2px;background:linear-gradient(#f3f4f4,#e8e9ea)"></div><svg class="a" style="left:205.5px;top:1020px" width="17" height="14" viewBox="0 0 17 14"><rect x="0" y="0.5" width="15" height="2.2" fill="#717171"/><rect x="0" y="5" width="15" height="2.2" fill="#717171"/><rect x="0" y="9.5" width="11" height="2.2" fill="#717171"/><path d="M12 8 L17 10.6 L12 13.2 Z" fill="#717171"/></svg>
<div class="a" style="left:228.4px;top:1015px;width:22.900000000000006px;height:23.799999999999955px;border:1px solid #b9babb;border-radius:2px;background:linear-gradient(#f3f4f4,#e8e9ea)"></div><svg class="a" style="left:232.5px;top:1019px" width="16" height="16" viewBox="0 0 16 16"><path d="M1.5 9 V6 Q1.5 4 3.5 4 H12" stroke="#717171" stroke-width="2.2" fill="none"/><path d="M11 1 L15 4 L11 7 Z" fill="#717171"/><path d="M14.5 7 V10 Q14.5 12 12.5 12 H4" stroke="#717171" stroke-width="2.2" fill="none"/><path d="M5 9 L1 12 L5 15 Z" fill="#717171"/></svg>
<div class="a" style="left:254.4px;top:1015px;width:22.900000000000006px;height:23.799999999999955px;border:1px solid #b9babb;border-radius:2px;background:linear-gradient(#f3f4f4,#e8e9ea)"></div><svg class="a" style="left:258px;top:1019.5px" width="16" height="15" viewBox="0 0 16 15"><path d="M1 13.5 L13.5 1.5 M1 1.5 L5 5.5 M9 9.5 L13.5 13.5" stroke="#717171" stroke-width="2.2" fill="none"/><path d="M9 0.5 H15 V6.5 Z M15 8.5 V14.5 H9 Z" fill="#717171"/></svg>
<svg class="a" style="left:1819.5px;top:1028px" width="15" height="13" viewBox="0 0 15 13"><path d="M0 4 H2.5 L6 1 V12 L2.5 9 H0 Z" fill="#707070"/><path d="M8.3 4.3 Q9.5 6.5 8.3 8.7 M10.6 2.5 Q12.8 6.5 10.6 10.5 M12.8 0.8 Q16 6.5 12.8 12.2" stroke="#f39c12" stroke-width="1.3" fill="none"/></svg>
<svg class="a" style="left:1840px;top:1018.5px" width="75" height="23" viewBox="0 0 75 23"><defs><linearGradient id="vg" x1="0" x2="1" y1="0" y2="0"><stop offset="0" stop-color="#8ad48a"/><stop offset="0.78" stop-color="#22cc22"/><stop offset="0.86" stop-color="#f5c400"/><stop offset="0.93" stop-color="#ff8c00"/><stop offset="0.935" stop-color="#ffffff"/><stop offset="1" stop-color="#ffffff"/></linearGradient></defs><path d="M1.5 21.5 L72.5 1.5 L73.5 2.5 V21.5 Z" fill="url(#vg)" stroke="#707070" stroke-width="1.4" stroke-linejoin="round"/></svg>
<div class="t" style="left:1846.5px;top:1020.3px;font-size:9px;color:#9a9a9a">115%</div>
<div id="task" class="a"></div>
<div class="a" style="left:0;top:1043px;width:1920px;height:1px;background:#c4c8ca"></div>
<!-- TASKBAR -->
<div class="a" style="left:0;top:1044px;width:1920px;height:36px;background:#dde6e6"></div>
<svg class="a" style="left:0px;top:1043.7px" width="36" height="36" viewBox="0 0 36 36"><circle cx="18" cy="18" r="15.3" fill="none" stroke="#232728" stroke-width="1.9"/><path d="M3 18 Q3 11 7.6 9.8 L7.9 9.6 L11.3 8.2 Q20 8.6 26.7 13.2 Q29.2 16 29.3 19.8 Q27.5 25 20 26.6 Q12 27.6 7.4 27.5 Q3 23.5 3 18 Z" fill="#232728"/><path d="M12.3 18.2 Q20 24.5 28.6 22.6" stroke="#e6eeee" stroke-width="1.3" fill="none"/><circle cx="22" cy="16.3" r="3.7" fill="#e6eeee"/><circle cx="22" cy="16.3" r="2.6" fill="#232728"/><circle cx="22.3" cy="15.6" r="1" fill="#e6eeee"/></svg>
<svg class="a" style="left:43.8px;top:1051.2px" width="22" height="22" viewBox="0 0 22 22"><defs><linearGradient id="tor" x1="0" x2="0" y1="0" y2="1"><stop offset="0" stop-color="#9b30d9"/><stop offset="1" stop-color="#5a0f8a"/></linearGradient></defs><circle cx="11" cy="11" r="11" fill="url(#tor)"/><path d="M11 4 A7 7 0 0 1 11 18 M11 6.5 A4.5 4.5 0 0 1 11 15.5 M11 9 A2 2 0 0 1 11 13" stroke="#f0d8ff" stroke-width="1.2" fill="none"/></svg>
<svg class="a" style="left:78px;top:1051px" width="22.5" height="22.5" viewBox="0 0 22 22"><circle cx="11" cy="11" r="11" fill="#fbc116"/><path d="M11 11 L1.5 5.5 A11 11 0 0 1 20.5 5.5 Z" fill="#e33b2e"/><path d="M11 11 L1.5 5.5 A11 11 0 0 0 11 22 Z" fill="#2aa24a"/><circle cx="11" cy="11" r="5" fill="#fff"/><circle cx="11" cy="11" r="4" fill="#1a73e8"/></svg>
<div class="a" style="left:113.8px;top:1052.9px;width:18.2px;height:18.4px;background:#323a3c"></div><svg class="a" style="left:118px;top:1057px" width="10" height="11" viewBox="0 0 10 11"><path d="M3 1.5 L7 5.5 L3 9.5" stroke="#9aa6a6" stroke-width="1" fill="none"/></svg>
<svg class="a" style="left:147.8px;top:1053px" width="18.6" height="18.2" viewBox="0 0 18.6 18.2"><rect width="18.6" height="18.2" fill="#2f3839"/><path d="M0 18.2 V11 L3 5 L7 12 L10 9 L13 13 L18.6 12 V18.2 Z" fill="#5cb88a"/></svg>
<svg class="a" style="left:180px;top:1052.4px" width="22" height="20" viewBox="0 0 22 20"><rect x="0" y="0" width="22" height="16" rx="1" fill="#2a2a2e"/><rect x="3" y="3" width="16" height="10" fill="none" stroke="#6a6a70" stroke-width="0.8" stroke-dasharray="1.5 1"/><rect x="6" y="16" width="10" height="2.5" fill="#bfc4c6"/><circle cx="16" cy="17" r="1.8" fill="none" stroke="#d9322c" stroke-width="1.1"/><circle cx="19.5" cy="17" r="1.8" fill="none" stroke="#d9322c" stroke-width="1.1"/><path d="M16 15 L19 10 M19.5 15 L16.5 10" stroke="#eee" stroke-width="0.9"/></svg>
<svg class="a" style="left:214.8px;top:1052px" width="20.2" height="20" viewBox="0 0 20.2 20"><rect width="20.2" height="20" fill="#2d3436"/><path d="M3 6 H17 M3 13 H17" stroke="#555d60" stroke-width="1.1"/><path d="M3 6 H14 M3 13 H7" stroke="#3daee9" stroke-width="1.3"/><circle cx="14" cy="6" r="1.8" fill="#fff"/><circle cx="7" cy="13" r="1.8" fill="#fff"/></svg>
<svg class="a" style="left:249.7px;top:1052.9px" width="18.4" height="18.4" viewBox="0 0 18.4 18.4"><circle cx="9.2" cy="9.2" r="9.2" fill="#43a047"/><path d="M4 8 Q6 5 11 6 Q14 6 14.5 9 L14 13 L12.5 13 L12 10.5 L8 10.5 L7.5 13 L6 13 L6 10 Q4.5 9.5 4 8 Z" fill="#f2f2f2"/><path d="M5 6 L3.5 3 M7 5.5 L7.5 2.5" stroke="#f2f2f2" stroke-width="0.9"/></svg>
<svg class="a" style="left:283.6px;top:1052px" width="19" height="20" viewBox="0 0 19 20"><defs><radialGradient id="bb" cx="0.4" cy="0.35" r="0.7"><stop offset="0" stop-color="#4fb2ff"/><stop offset="1" stop-color="#1769d6"/></radialGradient></defs><circle cx="9.5" cy="10" r="9.5" fill="url(#bb)"/><path d="M4 6 Q9 5 12 7 Q8 9 9 12 Q11 14 15 13 Q11 16 7 14 Q5 12 7 9 Q5 8 4 6 Z" fill="#dde9f4"/></svg>
<svg class="a" style="left:318.8px;top:1051px" width="16" height="21.6" viewBox="0 0 16 21.6"><rect width="16" height="21.6" rx="1.5" fill="#6e6e6e"/><rect x="13" y="0" width="3" height="21.6" fill="#555"/><rect x="0" y="6.5" width="16" height="6" fill="#3fb34f"/><text x="2" y="11.3" font-size="5" fill="#e8ffe8" font-family="Liberation Sans">nqq</text></svg>
<svg class="a" style="left:351.5px;top:1053px" width="19" height="18.5" viewBox="0 0 19 18.5"><path d="M3 4 A8 8 0 0 0 16 15.5" stroke="#4a5050" stroke-width="2.4" fill="none"/><path d="M6 2.5 A8 8 0 0 1 17 12" stroke="#7c8a8a" stroke-width="2.4" fill="none"/><circle cx="9.5" cy="9.2" r="4" fill="none" stroke="#2ebf8c" stroke-width="2.4"/></svg>
<svg class="a" style="left:384px;top:1053px" width="22" height="18" viewBox="0 0 22 18"><path d="M4 8 Q6 3 10 4 L15 1 Q14 5 16 8 Q16 13 10 13 Q5 13 4 8 Z" fill="#8c7557"/><circle cx="8" cy="7.5" r="2" fill="#fff"/><circle cx="11.5" cy="7.5" r="2" fill="#fff"/><circle cx="8.3" cy="7.8" r="0.9" fill="#222"/><circle cx="11.8" cy="7.8" r="0.9" fill="#222"/><ellipse cx="2.8" cy="9.5" rx="2.6" ry="2" fill="#333"/><path d="M14 12 L21 17" stroke="#7a5a3a" stroke-width="1.6"/></svg>
<svg class="a" style="left:419px;top:1052px" width="20.1" height="19.8" viewBox="0 0 20 20"><rect width="20" height="20" rx="4.5" fill="#1e1e1e"/><rect x="1.3" y="1.3" width="17.4" height="17.4" rx="3.5" fill="#f07b1d"/><path d="M1.3 7 Q6 4 12 6 M1.3 14 Q7 16 18.7 12 M14 2 L11 7" stroke="#1e1e1e" stroke-width="1.6" fill="none"/><ellipse cx="10" cy="10.5" rx="5" ry="3" fill="#fff"/><circle cx="10" cy="10.5" r="2.4" fill="#5cb83a"/><circle cx="10" cy="10.5" r="1" fill="#111"/></svg>
<svg class="a" style="left:453.8px;top:1053px" width="18.5" height="18.5" viewBox="0 0 18.5 18.5"><circle cx="9.25" cy="9.25" r="9" fill="#f4f8f8" stroke="#d7dede" stroke-width="0.5"/><path d="M3.5 12 A6.5 6.5 0 0 1 13 3.5" stroke="#2d8fe0" stroke-width="1.4" fill="none"/><path d="M15 6.5 A6.5 6.5 0 0 1 5.5 15" stroke="#27ae60" stroke-width="1.4" fill="none"/><path d="M6 7 L9 9 L6 11 M13 7.5 L10 9.5 L13 11.5" stroke="#2d6fe0" stroke-width="1.3" fill="none"/></svg>
<svg class="a" style="left:486px;top:1051px" width="22" height="21.3" viewBox="0 0 22 21.3"><rect width="22" height="21.3" rx="2" fill="#2e5577"/><path d="M3 5 Q8 4 11 9 Q13 13 17 17 M5 7 Q4 12 6 14" stroke="#b9cfe0" stroke-width="0.9" fill="none"/><path d="M16 3 L19 6" stroke="#dfe8ef" stroke-width="1.8"/></svg>
<svg class="a" style="left:521px;top:1054.6px" width="20" height="15" viewBox="0 0 20 15"><ellipse cx="10" cy="7.5" rx="10" ry="7.5" fill="#cf4a98"/><ellipse cx="10" cy="7.5" rx="6.5" ry="5.5" fill="#dcdcdc"/></svg>
<svg class="a" style="left:556px;top:1053px" width="18" height="18" viewBox="0 0 18 18"><path d="M2 12 V9 A7 7 0 0 1 16 9 V12" stroke="#1b3fb5" stroke-width="1.8" fill="none"/><rect x="0.5" y="10" width="3.5" height="7" rx="1" fill="#1b4bd0"/><rect x="14" y="10" width="3.5" height="7" rx="1" fill="#1b4bd0"/><path d="M5 14 L6.5 9 L8 16 L9.5 8 L11 15 L12.5 10" stroke="#f5a300" stroke-width="1.2" fill="none"/><path d="M6 13 L7.5 11 L9 14" stroke="#e23030" stroke-width="1" fill="none"/></svg>
<svg class="a" style="left:588.7px;top:1055px" width="21" height="16" viewBox="0 0 21 16"><path d="M1 9 L7 5 L3 4.5 L8 1 L12 1.5 Q18 2 19.5 8 Q19.5 14 13 15 Q8 15 6.5 11 L2.5 13.5 Q0 13 1 9 Z" fill="#f0801e"/><circle cx="13" cy="8.5" r="4.2" fill="#fff"/><circle cx="13" cy="8.5" r="2.6" fill="#2a6fc9"/></svg>
<svg class="a" style="left:621.9px;top:1052.9px" width="22.3" height="18.4" viewBox="0 0 22.3 18.4"><path d="M0 2.5 H9 L11 0 H22.3 V18.4 H0 Z" fill="#b8141f"/><rect x="0" y="3.5" width="22.3" height="14.9" fill="#d02331"/><text x="6" y="14.5" font-size="8.5" font-weight="700" font-style="italic" fill="#fff" font-family="Liberation Sans">Fz</text></svg>
<div class="a" style="left:651px;top:1046.2px;width:127px;height:31.4px;background:#c8d0d0;border-top:3px solid #a3abab"></div>
<svg class="a" style="left:656.5px;top:1052px" width="21" height="21" viewBox="0 0 21 21"><defs><radialGradient id="ffg" cx="0.6" cy="0.2" r="0.9"><stop offset="0" stop-color="#ffe030"/><stop offset="0.5" stop-color="#ff8a16"/><stop offset="1" stop-color="#e8255a"/></radialGradient></defs><circle cx="10.5" cy="11" r="9.8" fill="url(#ffg)"/><path d="M13 1 Q18 4 17 9" stroke="#ffd83a" stroke-width="3" fill="none"/><circle cx="11" cy="11" r="4.8" fill="#7b3fd6"/><path d="M3 7 Q6 9 9 8" stroke="#ffb03a" stroke-width="2.2" fill="none"/></svg>
<div class="t" style="left:684.5px;top:1055.5px;font-size:13.5px;color:#31363b">NativeScript ...</div>
<div class="a" style="left:780px;top:1046.2px;width:127px;height:31.4px;background:#c8d0d0;border-top:3px solid #a3abab"></div>
<svg class="a" style="left:785.8px;top:1053px" width="20.2" height="18" viewBox="0 0 20.2 18"><path d="M0 0 H7 L9 2 H20.2 V18 H0 Z" fill="#1d77c9"/><rect x="0" y="4.5" width="20.2" height="13.5" fill="#3d9be9"/><rect x="0" y="4" width="20.2" height="1" fill="#e0f0ff"/></svg>
<div class="t" style="left:813.5px;top:1055.5px;font-size:13.5px;color:#31363b">4. Understan...</div>
<div class="a" style="left:909px;top:1046.2px;width:127px;height:31.4px;background:#d5dddd"></div>
<svg class="a" style="left:916px;top:1053.5px" width="17.8" height="17.8" viewBox="0 0 18 18"><circle cx="9" cy="9" r="9" fill="#2f86e8"/><circle cx="6.5" cy="9" r="2.6" fill="none" stroke="#eaf3ff" stroke-width="1.1"/><circle cx="11.5" cy="9" r="2.6" fill="none" stroke="#eaf3ff" stroke-width="1.1"/><path d="M9 9 V14.5 M9 9 V3.5" stroke="#eaf3ff" stroke-width="1.1"/></svg>
<div class="t" style="left:942.5px;top:1055.5px;font-size:13.5px;color:#31363b">qBittorrent v...</div>
<div class="a" style="left:1038px;top:1046.2px;width:127px;height:31.4px;background:#c8d0d0;border-top:3px solid #a3abab"></div>
<svg class="a" style="left:1045px;top:1052.8px" width="18.2" height="18" viewBox="0 0 18.2 18"><rect width="18.2" height="18" fill="#2e3a44"/><path d="M13.5 3 L13.5 15 L5 9.5 M4 6 L13.5 12.5" stroke="#2fa0f0" stroke-width="1.8" fill="none"/></svg>
<div class="t" style="left:1071.5px;top:1055.5px;font-size:13.5px;color:#31363b">app.module....</div>
<div class="a" style="left:1167px;top:1046.2px;width:127px;height:31.4px;background:#c8d0d0;border-top:3px solid #a3abab"></div>
<svg class="a" style="left:1174px;top:1052.8px" width="18.2" height="18" viewBox="0 0 18.2 18"><rect width="18.2" height="18" fill="#2e3a44"/><path d="M13.5 3 L13.5 15 L5 9.5 M4 6 L13.5 12.5" stroke="#2fa0f0" stroke-width="1.8" fill="none"/></svg>
<div class="t" style="left:1200.5px;top:1055.5px;font-size:13.5px;color:#31363b">package.json...</div>
<div class="a" style="left:1296px;top:1046.2px;width:127px;height:31.4px;background:#abd6ec;border-top:3px solid #66b8e6"></div>
<svg class="a" style="left:1303.7px;top:1052.8px" width="16.5" height="18.5" viewBox="0 0 18 20"><path d="M7.2 1.5 Q9 0.3 10.8 1.5 L16.5 16.5 Q17 18.5 15 18.5 L3 18.5 Q1 18.5 1.5 16.5 Z" fill="#f39a17"/><path d="M5.6 6.2 L12.4 6.2 L13.3 8.8 Q9 10 4.7 8.8 Z" fill="#fff"/><path d="M3.9 11.5 L14.1 11.5 L15.1 14.2 Q9 16.2 2.9 14.2 Z" fill="#fff"/></svg>
<div class="t" style="left:1329.5px;top:1055.5px;font-size:13.5px;color:#31363b">20. Creating ...</div>
<svg class="a" style="left:1429.5px;top:1046px" width="28" height="31" viewBox="0 0 28 31"><defs><radialGradient id="ff2" cx="0.65" cy="0.15" r="0.95"><stop offset="0" stop-color="#fff044"/><stop offset="0.45" stop-color="#ff9a1a"/><stop offset="1" stop-color="#e3236a"/></radialGradient></defs><circle cx="14" cy="17" r="13.5" fill="url(#ff2)"/><path d="M17 1 Q27 6 26 16" stroke="#ffdc3a" stroke-width="5" fill="none"/><circle cx="14.5" cy="17" r="6.5" fill="#7542e5"/><path d="M3 12 Q8 15 12 13" stroke="#ffb23a" stroke-width="3" fill="none"/></svg>
<svg class="a" style="left:1471.5px;top:1053px" width="17" height="17" viewBox="0 0 17 17"><path d="M8.5 2 Q13 2 13 7 V11 L15 13.5 H2 L4 11 V7 Q4 2 8.5 2 Z" fill="none" stroke="#222" stroke-width="1.2"/><circle cx="8.5" cy="15.3" r="1.4" fill="#222"/><path d="M1.5 5 Q2 2.5 3.5 1 M15.5 5 Q15 2.5 13.5 1" stroke="#222" stroke-width="0.9" fill="none"/></svg>
<div class="a" style="left:1495.1px;top:1051px;width:22px;height:21.8px;background:#ef3b2d"></div><svg class="a" style="left:1497px;top:1054px" width="18" height="16" viewBox="0 0 18 16"><path d="M2 8 L7 3 L12 8 L7 13 Z" fill="#fff"/><path d="M11 3 L16 8 L11 13" stroke="#fff" stroke-width="1.6" fill="none"/></svg>
<div class="t" style="left:1524.5px;top:1056.4px;font-size:12.5px;font-weight:700;color:#3b4c9c">EN</div>
<svg class="a" style="left:1549.8px;top:1054px" width="16.5" height="16.5" viewBox="0 0 16.5 16.5"><circle cx="8.25" cy="8.25" r="7.5" fill="none" stroke="#222" stroke-width="1.2"/><rect x="5.8" y="5.5" width="1.8" height="5.5" fill="#222"/><rect x="8.9" y="5.5" width="1.8" height="5.5" fill="#222"/></svg>
<svg class="a" style="left:1573.9px;top:1051.5px" width="20.6" height="20.8" viewBox="0 0 20 20"><circle cx="10" cy="10" r="10" fill="#3e7fd6"/><text x="2.8" y="14.5" font-size="12" fill="#eef5ff" font-family="Liberation Sans">qb</text></svg>
<svg class="a" style="left:1602px;top:1053.7px" width="16.5" height="16.5" viewBox="0 0 16.5 16.5"><path d="M6.5 1 H10 L14 15 H2.5 Z" fill="none" stroke="#222" stroke-width="1.2"/><path d="M5 6 H11.5 M4 10 H12.5" stroke="#222" stroke-width="2"/><rect x="0.5" y="14.8" width="15.5" height="1.6" fill="#222"/></svg>
<svg class="a" style="left:1628.6px;top:1053.7px" width="15" height="16.5" viewBox="0 0 15 16.5"><rect x="0.8" y="2.5" width="13.4" height="13.5" fill="none" stroke="#222" stroke-width="1.3"/><rect x="4" y="0.5" width="7" height="3.5" fill="#222"/><path d="M3.5 7 H11 M3.5 9.5 H11 M3.5 12 H8" stroke="#222" stroke-width="0.9"/></svg>
<svg class="a" style="left:1653.7px;top:1053.7px" width="16" height="16.5" viewBox="0 0 16 16.5"><path d="M0.5 5.5 H3.5 L8 1 V15.5 L3.5 11 H0.5 Z" fill="#222"/><path d="M10.5 5 Q12 8.25 10.5 11.5 M12.8 3 Q15.5 8.25 12.8 13.5" stroke="#222" stroke-width="1.1" fill="none"/></svg>
<svg class="a" style="left:1677.8px;top:1055.9px" width="20" height="12.2" viewBox="0 0 20 12.2"><rect x="0.6" y="0.6" width="17" height="11" fill="none" stroke="#222" stroke-width="1.2"/><rect x="17.8" y="3.5" width="2" height="5" fill="#222"/><path d="M3 3 L5.5 2 V10 H3 Z" fill="#222"/><path d="M8 6 L12 3.5 V8.5 Z M11 6 H15 M12 4.5 H14.5 M12 7.5 H14.5" stroke="#2ab59a" stroke-width="1.2" fill="#2ab59a"/></svg>
<svg class="a" style="left:1702.8px;top:1054.7px" width="21.2" height="13.7" viewBox="0 0 21.2 13.7"><rect width="21.2" height="13.7" fill="#fff"/><rect x="0" y="0.00" width="21.2" height="1.05" fill="#e0201f"/><rect x="0" y="1.96" width="21.2" height="1.05" fill="#e0201f"/><rect x="0" y="3.91" width="21.2" height="1.05" fill="#e0201f"/><rect x="0" y="5.87" width="21.2" height="1.05" fill="#e0201f"/><rect x="0" y="7.83" width="21.2" height="1.05" fill="#e0201f"/><rect x="0" y="9.79" width="21.2" height="1.05" fill="#e0201f"/><rect x="0" y="11.74" width="21.2" height="1.05" fill="#e0201f"/><rect x="0" y="0" width="9" height="7" fill="#2b3a8f"/></svg>
<svg class="a" style="left:1729.6px;top:1054px" width="20.4" height="16" viewBox="0 0 20.4 16"><path d="M1 6 Q10.2 -2 19.4 6 M4 9 Q10.2 3.5 16.4 9 M7 12 Q10.2 9.5 13.4 12" stroke="#222" stroke-width="1" fill="none"/><circle cx="10.2" cy="14.5" r="1.4" fill="none" stroke="#222" stroke-width="1"/></svg>
<svg class="a" style="left:1759.8px;top:1058.9px" width="12.4" height="6.2" viewBox="0 0 12.4 6.2"><path d="M0 6.2 L6.2 0 L12.4 6.2 Z" fill="#222"/></svg>
<div class="t" style="left:1788.5px;top:1052px;font-size:23px;color:#232627;letter-spacing:-0.55px">2:04 PM</div>
<div class="a" style="left:1890px;top:1050.2px;width:24.1px;height:23.4px;border:1.4px solid #232627"></div><div class="a" style="left:1893px;top:1069.8px;width:18px;height:1px;background:#232627"></div>
</body></html>
